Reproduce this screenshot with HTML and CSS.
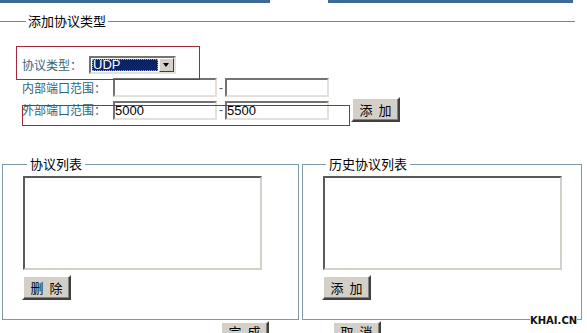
FILE: index.html
```html
<!DOCTYPE html>
<html lang="zh-CN">
<head>
<meta charset="utf-8">
<link rel="stylesheet" href="styles.css">
<title>添加协议类型</title>
</head>
<body>
<div class="topbar">
  <span class="bar bar-left"></span>
  <span class="bar-gap"></span>
  <span class="bar bar-right"></span>
</div>

<fieldset class="addbox">
  <legend>添加协议类型</legend>
  <div class="row row-type">
    <label class="lbl">协议类型：</label>
    <div class="fake-select">
      <span class="sel-value">UDP</span>
      <span class="sel-arrow"></span>
    </div>
  </div>
  <div class="row">
    <label class="lbl">内部端口范围：</label>
    <input type="text" class="port" value="">
    <span class="dash">-</span>
    <input type="text" class="port" value="">
  </div>
  <div class="row row-ext">
    <label class="lbl">外部端口范围：</label>
    <input type="text" class="port" value="5000">
    <span class="dash">-</span>
    <input type="text" class="port" value="5500">
    <button class="btn btn-add">添 加</button>
  </div>
</fieldset>

<div class="lists">
  <fieldset class="listbox list-left">
    <legend>协议列表</legend>
    <textarea class="listarea"></textarea>
    <button class="btn">删 除</button>
  </fieldset>
  <fieldset class="listbox list-right">
    <legend>历史协议列表</legend>
    <textarea class="listarea"></textarea>
    <button class="btn">添 加</button>
  </fieldset>
</div>

<div class="actions">
  <button class="btn">完 成</button>
  <button class="btn">取 消</button>
</div>

<div class="mark mark-type"></div>
<div class="mark mark-ext"></div>
<div class="watermark">KHAI.CN</div>
</body>
</html>
```

FILE: styles.css
```css
html, body
{
	margin: 0;
	padding: 0;
	overflow: hidden;
	background: #fff;
	font-family: "Noto Sans CJK SC", "Liberation Sans", sans-serif;
	font-size: 12px;
}
.topbar
{
	display: flex;
	height: 3px;
}
.bar
{
	display: block;
	background: #3d6a94;
}
.bar-left
{
	width: 270px;
}
.bar-gap
{
	width: 58px;
}
.bar-right
{
	width: 245px;
}

/* top group */
.addbox
{
	margin: 10px 0 0 0;
	padding: 27px 0 0 22px;
	width: 553px;
	border: none;
	border-top: 1px solid #808080;
}
.addbox legend
{
	margin-left: 4px;
	padding: 0 2px;
	font-size: 13px;
	line-height: 16px;
	color: #000;
}
.row
{
	display: flex;
	align-items: center;
	height: 19px;
}
.row-type
{
	height: 18px;
	margin-bottom: 4px;
}
.row-ext
{
	height: 25px;
}
.lbl
{
	color: #32647a;
	font-size: 12px;
	line-height: 14px;
	margin-right: 7px;
	white-space: nowrap;
}
.fake-select
{
	display: flex;
	box-sizing: border-box;
	width: 87px;
	height: 18px;
	border: 2px solid;
	border-color: #737373 #e4e1da #e4e1da #737373;
	background: #fff;
}
.sel-value
{
	flex: 1;
	margin: 1px;
	padding-left: 1px;
	background: #0a246a;
	color: #fff;
	outline: 1px dotted #a0a8c8;
	outline-offset: -1px;
	font-family: "Liberation Sans", sans-serif;
	font-size: 13px;
	line-height: 12px;
}
.sel-arrow
{
	position: relative;
	box-sizing: border-box;
	width: 15px;
	background: #d4d0c8;
	border: 1px solid;
	border-color: #fff #404040 #404040 #fff;
}
.sel-arrow::after
{
	content: "";
	position: absolute;
	left: 3px;
	top: 4px;
	border-left: 3.5px solid transparent;
	border-right: 3.5px solid transparent;
	border-top: 4px solid #000;
}
.port
{
	box-sizing: border-box;
	width: 104px;
	height: 19px;
	margin: 0;
	padding: 0 2px 0 0;
	border: 2px solid;
	border-color: #737373 #e4e1da #e4e1da #737373;
	font-family: "Liberation Sans", sans-serif;
	font-size: 13px;
	color: #000;
	outline: none;
}
.row-ext .port
{
	margin-top: 2px;
}
.dash
{
	width: 8px;
	text-align: center;
	color: #555;
	font-family: "Liberation Sans", sans-serif;
	font-size: 12px;
}
.btn
{
	box-sizing: border-box;
	width: 49px;
	height: 25px;
	margin: 0;
	padding: 0;
	background: #d4d0c8;
	border: 2px solid;
	border-color: #fff #404040 #404040 #fff;
	box-shadow: inset -1px -1px #808080;
	font-family: "Noto Sans CJK SC", sans-serif;
	font-size: 13px;
	line-height: 19px;
	word-spacing: 3px;
	color: #000;
}
.btn-add
{
	margin-left: 22px;
}

/* lower lists */
.lists
{
	display: flex;
	gap: 3px;
	margin: 34px 0 0 2px;
}
.listbox
{
	box-sizing: border-box;
	margin: 0;
	padding: 4px 0 19px 21px;
	border: 1px solid #7d9aa6;
}
.list-left
{
	width: 297px;
}
.list-right
{
	width: 280px;
	padding-left: 20px;
}
.listbox legend
{
	margin-left: 3px;
	padding: 0 3px;
	font-size: 13px;
	line-height: 16px;
	color: #000;
}
.listarea
{
	display: block;
	box-sizing: border-box;
	width: 239px;
	height: 94px;
	margin: 0 0 5px -1px;
	border: 2px solid;
	border-color: #5a5a5a #d4d0c8 #d4d0c8 #5a5a5a;
	resize: none;
	outline: none;
}
.list-right .listarea
{
	margin-left: 0;
}
.list-left .btn
{
	margin-left: -2px;
}
.list-right .btn
{
	margin-left: -1px;
}
.actions
{
	display: flex;
	gap: 63px;
	margin: 1px 0 0 220px;
}
.actions .btn
{
	line-height: 15px;
	padding-bottom: 5px;
}

/* overlays */
.mark
{
	position: absolute;
	border: 1px solid #a3283a;
}
.mark-type
{
	left: 16px;
	top: 46px;
	width: 182px;
	height: 32px;
}
.mark-ext
{
	left: 22px;
	top: 105px;
	width: 326px;
	height: 19px;
}
.watermark
{
	position: absolute;
	left: 530px;
	top: 315px;
	font-family: "DejaVu Sans", sans-serif;
	font-weight: bold;
	font-size: 10px;
	color: #111;
	background: #fff;
	line-height: 11px;
}
```
